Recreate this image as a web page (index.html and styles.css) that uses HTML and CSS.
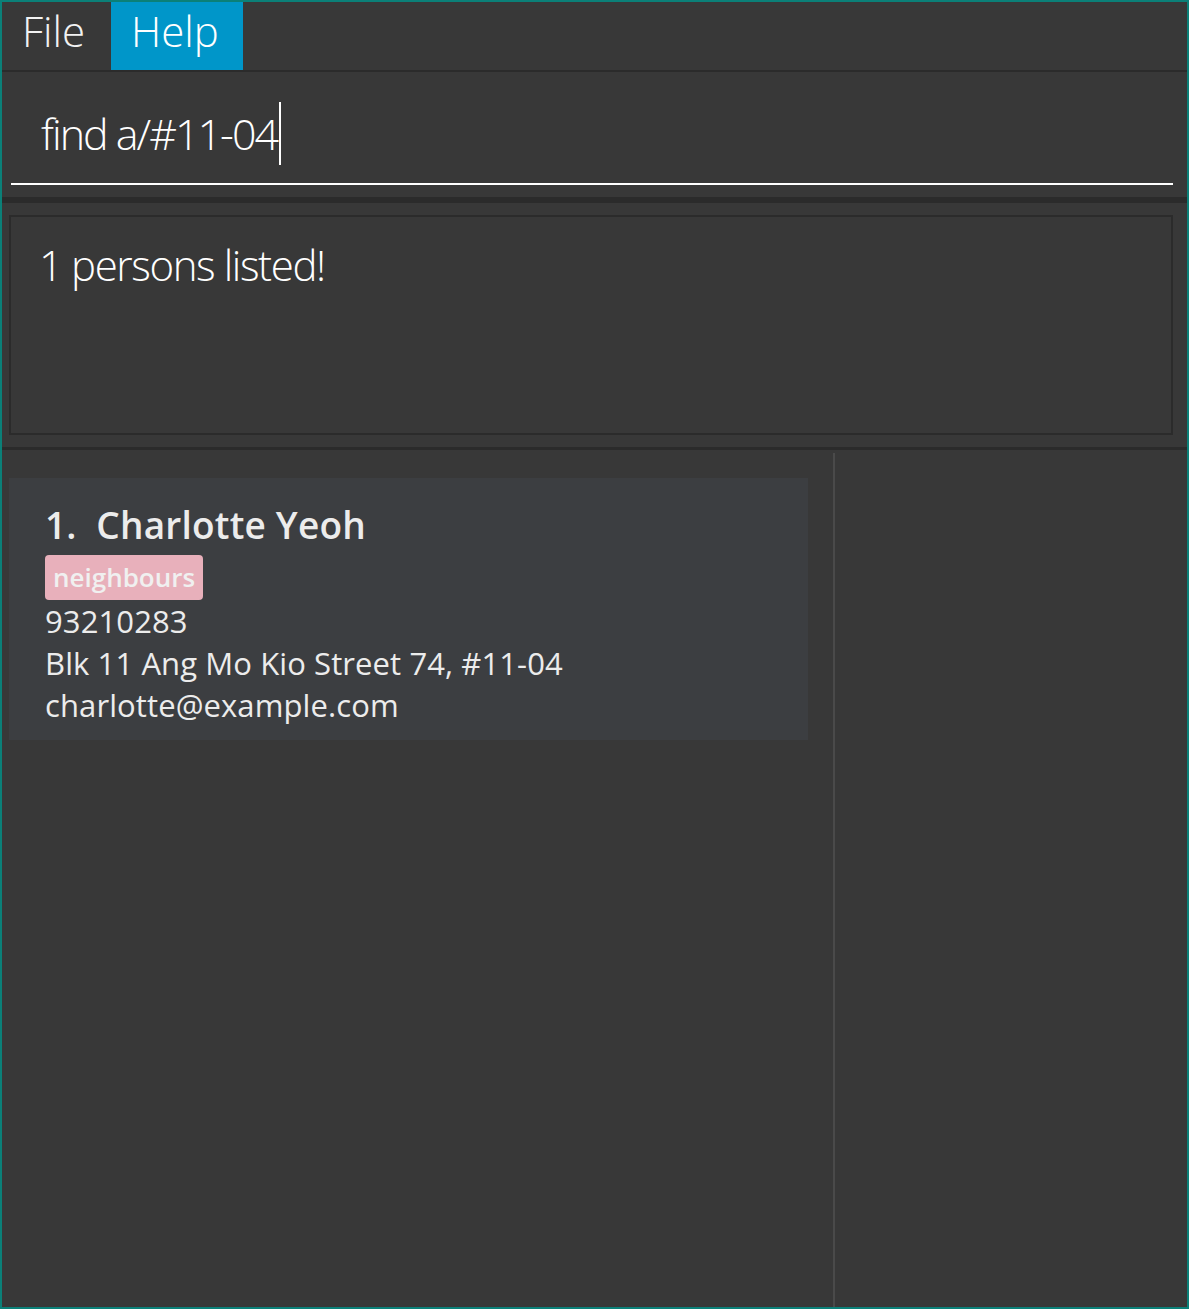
FILE: index.html
```html
<!DOCTYPE html>
<html>
<head>
<meta charset="utf-8">
<link rel="stylesheet" href="styles.css">
</head>
<body>
<div class="window">
  <div class="menubar">
    <div class="menu">File</div>
    <div class="menu active">Help</div>
  </div>
  <div class="sep thin"></div>
  <div class="commandbox">
    <div class="field">
      <span class="cmd">find a/#11-04</span><span class="caret"></span>
    </div>
  </div>
  <div class="sep thick"></div>
  <div class="result">
    <div class="result-box">1 persons listed!</div>
  </div>
  <div class="sep mid"></div>
  <div class="main">
    <div class="list">
      <div class="card">
        <div class="name">1.&nbsp;&nbsp;Charlotte Yeoh</div>
        <div class="tags"><span class="tag">neighbours</span></div>
        <div class="line">93210283</div>
        <div class="line">Blk 11 Ang Mo Kio Street 74, #11-04</div>
        <div class="line">charlotte@example.com</div>
      </div>
    </div>
    <div class="divider"></div>
    <div class="side"></div>
  </div>
</div>
</body>
</html>
```
FILE: styles.css
```css
html, body {
  margin: 0;
  padding: 0;
}
body {
  background: #0b8078;
  font-family: "Open Sans", "Noto Sans", sans-serif;
  color: #ffffff;
}
.window {
  box-sizing: border-box;
  width: 1189px;
  height: 1309px;
  border: 2px solid #0b8078;
  background: #383838;
  display: flex;
  flex-direction: column;
}
.menubar {
  height: 68px;
  display: flex;
  background: #383838;
}
.menu {
  font-weight: 300;
  font-size: 42px;
  line-height: 57px;
  padding: 0 20px;
  color: #f2f2f2;
}
.menu:first-child {
  width: 69px;
}
.menu.active {
  background: #0096c9;
  width: 92px;
  color: #ffffff;
}
.sep {
  background: #2b2b2b;
}
.sep.thin { height: 2px; }
.sep.thick { height: 6px; }
.sep.mid { height: 3px; }
.commandbox {
  height: 125px;
  padding: 0 14px 0 9px;
  box-sizing: border-box;
}
.field {
  height: 113px;
  border-bottom: 2px solid #ffffff;
  padding-left: 30px;
  display: flex;
  align-items: center;
  padding-top: 12px;
  box-sizing: border-box;
}
.cmd {
  font-weight: 300;
  font-size: 43px;
  line-height: 60px;
  letter-spacing: -2px;
}
.caret {
  display: inline-block;
  width: 2px;
  height: 63px;
  background: #ffffff;
  margin-left: 2px;
}
.result {
  height: 244px;
  padding: 12px 14px 12px 7px;
  box-sizing: border-box;
}
.result-box {
  height: 100%;
  box-sizing: border-box;
  border: 2px solid #2b2b2b;
  padding: 18px 28px;
  font-weight: 300;
  font-size: 42px;
  line-height: 60px;
  letter-spacing: -1.4px;
  color: #ffffff;
}
.main {
  flex: 1;
  display: flex;
  min-height: 0;
}
.list {
  width: 831px;
  padding: 28px 0 0 7px;
  box-sizing: border-box;
}
.card {
  width: 799px;
  height: 262px;
  box-sizing: border-box;
  background: #3c3e41;
  padding: 22px 0 0 36px;
  color: #ececec;
}
.name {
  font-weight: 600;
  font-size: 37px;
  line-height: 50px;
  letter-spacing: 0.2px;
}
.tags {
  height: 45px;
  margin-top: 5px;
}
.tag {
  display: inline-block;
  background: #e8b0bb;
  border-radius: 4px;
  height: 45px;
  line-height: 45px;
  padding: 0 8px;
  font-size: 26px;
  font-weight: 600;
  color: #f0f0f0;
}
.line {
  font-size: 31px;
  line-height: 42px;
  letter-spacing: 0.1px;
}
.divider {
  width: 2px;
  background: #4a4a4a;
  margin-top: 3px;
}
.side {
  flex: 1;
}
```
